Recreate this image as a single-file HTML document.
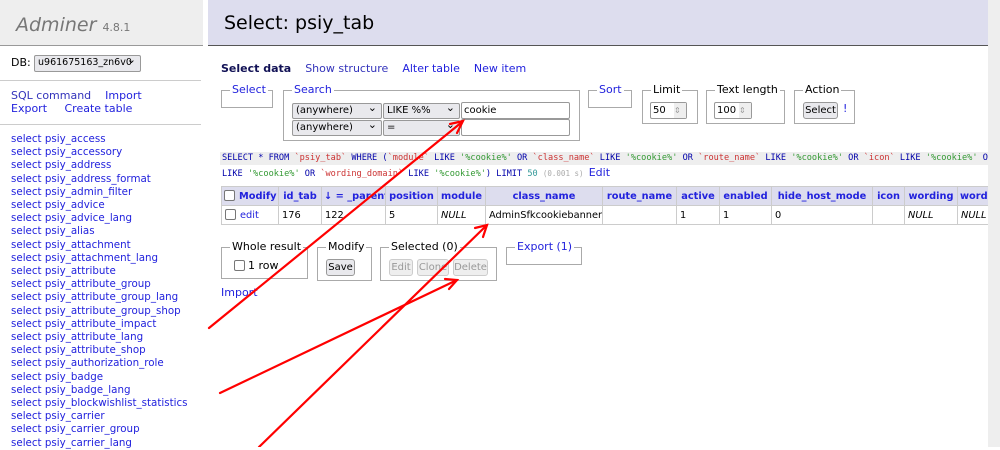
<!DOCTYPE html>
<html><head><meta charset="utf-8"><style>
*{box-sizing:border-box}
body{margin:0;width:1000px;height:447px;overflow:hidden;background:#fff;font-family:"DejaVu Sans","Liberation Sans",sans-serif;font-size:11px;color:#000;position:relative}
.a{position:absolute;white-space:nowrap}
a,.l{color:#22d;text-decoration:none}
.fs{position:absolute;border:1px solid #aaa}
.lg{position:absolute;top:-8px;left:8px;background:#fff;padding:0 2px;font-size:11px;line-height:14px}
.sel{position:absolute;height:16px;border:1px solid #999;border-radius:2px;background:#e9e9ed;font-size:10px;line-height:14px;padding-left:3px}
.sel:after{content:"⌄";position:absolute;right:4px;top:-3px;font-size:11px}
.inp{position:absolute;height:17px;border:1px solid #999;border-radius:2px;background:#fff;font-size:10px;line-height:15px;padding-left:2px}
.btn{position:absolute;height:17px;border:1px solid #999;border-radius:3px;background:#e9e9ed;font-size:10px;line-height:15px;text-align:center}
.dis{color:#999;border-color:#ccc;background:#eee}
table{border-collapse:collapse;font-size:9.8px;table-layout:fixed}
td,th{border:1px solid #ccc;padding:0 3px;height:19px;white-space:nowrap;text-align:left;overflow:hidden}
th{background:#dde;color:#22d;text-align:center;padding:0 2px}
.cb{display:inline-block;width:11px;height:11px;border:1px solid #777;border-radius:2px;vertical-align:-2px;margin-right:4px;background:#fff}
.sql{font-family:"DejaVu Sans Mono","Liberation Mono",monospace;font-size:8.6px;color:#00a}
.r{color:#c33}.g{color:#393}
</style></head><body>
<div class="a" style="left:0;top:0;width:203px;height:46px;background:#eee;border-bottom:1px solid #999"></div>
<div class="a" style="left:16px;top:14px;font-size:19px;font-style:italic;color:#777">Adminer <span style="font-size:11px;font-style:normal">4.8.1</span></div>
<div class="a" style="left:208px;top:0;width:780px;height:46px;background:#dde;border-bottom:1px solid #555"></div>
<div class="a" style="left:224px;top:12px;font-size:19px">Select: psiy_tab</div>
<div class="a" style="left:988px;top:0;width:12px;height:447px;background:#eee"></div>
<div class="a" style="left:0;top:80px;width:201px;border-top:1px solid #ccc"></div>
<div class="a" style="left:0;top:124px;width:201px;border-top:1px solid #ccc"></div>
<div class="a" style="left:11px;top:56px;font-size:11px">DB:</div>
<div class="sel" style="left:34px;top:55px;width:107px;height:17px;font-size:9.5px">u961675163_zn6v0</div>
<div class="a" style="left:11px;top:89px;line-height:13px;font-size:11px"><span class="l" style="color:#33b">SQL command</span> &nbsp; &nbsp;<span class="l">Import</span><br><span class="l">Export</span> &nbsp; &nbsp; <span class="l">Create table</span></div>
<div class="a" style="left:11px;top:133px;line-height:13.2px;font-size:10.3px;color:#22d">select psiy_access<br>select psiy_accessory<br>select psiy_address<br>select psiy_address_format<br>select psiy_admin_filter<br>select psiy_advice<br>select psiy_advice_lang<br>select psiy_alias<br>select psiy_attachment<br>select psiy_attachment_lang<br>select psiy_attribute<br>select psiy_attribute_group<br>select psiy_attribute_group_lang<br>select psiy_attribute_group_shop<br>select psiy_attribute_impact<br>select psiy_attribute_lang<br>select psiy_attribute_shop<br>select psiy_authorization_role<br>select psiy_badge<br>select psiy_badge_lang<br>select psiy_blockwishlist_statistics<br>select psiy_carrier<br>select psiy_carrier_group<br>select psiy_carrier_lang</div>

<div class="a" style="left:221px;top:62px;font-size:11px"><b style="color:#115">Select data</b> &nbsp; &nbsp;<span class="l" style="color:#33b">Show structure</span> &nbsp; &nbsp;<span class="l">Alter table</span> &nbsp; &nbsp;<span class="l">New item</span></div>

<div class="fs" style="left:221px;top:90px;width:52px;height:18px"><span class="lg l">Select</span></div>
<div class="fs" style="left:283px;top:90px;width:297px;height:51px"><span class="lg l">Search</span></div>
<div class="sel" style="left:292px;top:103px;width:90px">(anywhere)</div>
<div class="sel" style="left:383px;top:103px;width:77px">LIKE %%</div>
<div class="inp" style="left:461px;top:102px;width:109px">cookie</div>
<div class="sel" style="left:292px;top:120px;width:90px">(anywhere)</div>
<div class="sel" style="left:383px;top:120px;width:77px">=</div>
<div class="inp" style="left:461px;top:119px;width:109px"></div>
<div class="fs" style="left:588px;top:90px;width:44px;height:18px"><span class="lg l">Sort</span></div>
<div class="fs" style="left:642px;top:90px;width:56px;height:34px"><span class="lg">Limit</span></div>
<div class="inp" style="left:650px;top:102px;width:37px">50<span style="position:absolute;right:0;top:0;width:12px;height:15px;background:#eee;color:#999;font-size:8px">⇕</span></div>
<div class="fs" style="left:706px;top:90px;width:79px;height:34px"><span class="lg">Text length</span></div>
<div class="inp" style="left:714px;top:102px;width:38px">100<span style="position:absolute;right:0;top:0;width:12px;height:15px;background:#eee;color:#999;font-size:8px">⇕</span></div>
<div class="fs" style="left:794px;top:90px;width:61px;height:34px"><span class="lg">Action</span></div>
<div class="btn" style="left:803px;top:102px;width:35px">Select</div>
<div class="a" style="left:843px;top:102px;color:#22d">!</div>

<div class="a" style="left:220px;top:152px;width:768px;height:13px;background:#eee;overflow:hidden"><div class="a sql" style="left:2px;top:1px">SELECT * FROM <span class="r">`psiy_tab`</span> WHERE (<span class="r">`module`</span> LIKE <span class="g">'%cookie%'</span> OR <span class="r">`class_name`</span> LIKE <span class="g">'%cookie%'</span> OR <span class="r">`route_name`</span> LIKE <span class="g">'%cookie%'</span> OR <span class="r">`icon`</span> LIKE <span class="g">'%cookie%'</span> OR</div></div>
<div class="a sql" style="left:222px;top:166px">LIKE <span class="g">'%cookie%'</span> OR <span class="r">`wording_domain`</span> LIKE <span class="g">'%cookie%'</span>) LIMIT <span style="color:#399">50</span> <span style="color:#aaa;font-size:7.5px">(0.001 s)</span> <span style="font-family:'DejaVu Sans';font-size:11px;color:#22d">Edit</span></div>

<div class="a" style="left:221px;top:186px;width:767px;height:44px;overflow:hidden">
<table style="width:800px">
<colgroup><col style="width:57px"><col style="width:43px"><col style="width:64px"><col style="width:52px"><col style="width:48px"><col style="width:117px"><col style="width:74px"><col style="width:43px"><col style="width:52px"><col style="width:101px"><col style="width:32px"><col style="width:53px"><col style="width:64px"></colgroup>
<tr><th style="text-align:left"><span class="cb"></span>Modify</th><th>id_tab</th><th>↓ = _parent</th><th>position</th><th>module</th><th>class_name</th><th>route_name</th><th>active</th><th>enabled</th><th>hide_host_mode</th><th>icon</th><th>wording</th><th style="text-align:left">wording_domain</th></tr>
<tr><td><span class="cb"></span><span class="l">edit</span></td><td>176</td><td>122</td><td>5</td><td><i>NULL</i></td><td>AdminSfkcookiebanner</td><td></td><td>1</td><td>1</td><td>0</td><td></td><td><i>NULL</i></td><td><i>NULL</i></td></tr>
</table></div>

<div class="fs" style="left:221px;top:247px;width:87px;height:32px"><span class="lg">Whole result</span></div>
<div class="a" style="left:234px;top:259px;font-size:11px"><span class="cb" style="margin-right:3px"></span>1 row</div>
<div class="fs" style="left:317px;top:247px;width:55px;height:34px"><span class="lg">Modify</span></div>
<div class="btn" style="left:326px;top:259px;width:29px">Save</div>
<div class="fs" style="left:380px;top:247px;width:117px;height:34px"><span class="lg">Selected (0)</span></div>
<div class="btn dis" style="left:389px;top:259px;width:24px">Edit</div>
<div class="btn dis" style="left:417px;top:259px;width:32px">Clone</div>
<div class="btn dis" style="left:453px;top:259px;width:35px">Delete</div>
<div class="fs" style="left:506px;top:247px;width:76px;height:18px"><span class="lg l">Export (1)</span></div>
<div class="a l" style="left:221px;top:286px;font-size:11px">Import</div>

<svg class="a" style="left:0;top:0" width="1000" height="447">
<g stroke="#f00" stroke-width="2.2" fill="none" stroke-linecap="round">
<line x1="209" y1="328" x2="462" y2="122"/>
<polyline points="450,124 463,121 457,133"/>
<line x1="220" y1="393" x2="457" y2="280"/>
<polyline points="445,279 457,280 449,289"/>
<line x1="259" y1="447" x2="487" y2="225"/>
<polyline points="475,228 487,225 483,237"/>
</g></svg>
</body></html>
